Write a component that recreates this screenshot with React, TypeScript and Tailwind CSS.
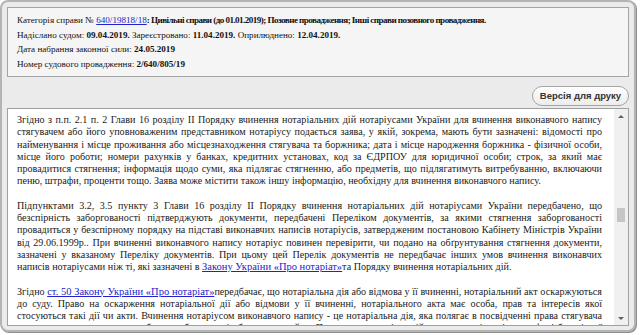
const Link = ({ children, big }: { children: React.ReactNode; big?: boolean }) => (
  <a className={big ? "text-[#2222cc] underline text-[10.5px] leading-none" : "text-[#2222cc] underline"}>
    {children}
  </a>
);

const App = () => {
  return (
    <div className="w-[640px] h-[335px] bg-white overflow-hidden font-['Liberation_Serif',serif]">
      <div className="w-[636px] h-[332px] rounded-[8px] border-2 border-[#b4b4b4] bg-[#ebebeb] shadow-[1px_1px_0_#8f8f8f] px-[5px] pt-[5px] flex flex-col">
        {/* case info */}
        <div className="h-[70px] border border-[#a4a4a4] bg-[#f5f5f5] px-[9px] pt-[5px] text-[9.1px] leading-[14.5px] text-[#111]">
          <div className="whitespace-nowrap">
            Категорія справи № <Link>640/19818/18</Link>
            <b className="tracking-[-0.55px]">
              : Цивільні справи (до 01.01.2019); Позовне провадження; Інші справи позовного провадження.
            </b>
          </div>
          <div>
            Надіслано судом: <b>09.04.2019.</b> Зареєстровано: <b>11.04.2019.</b> Оприлюднено:{" "}
            <b>12.04.2019.</b>
          </div>
          <div>
            Дата набрання законної сили: <b>24.05.2019</b>
          </div>
          <div>
            Номер судового провадження: <b>2/640/805/19</b>
          </div>
        </div>

        <div className="flex justify-end mt-[9px]">
          <button className="h-[20px] w-[97px] rounded-[10px] border border-[#a4a4a4] bg-gradient-to-b from-white to-[#ececec] font-['Liberation_Sans',sans-serif] text-[9.5px] font-bold text-[#333]">
            Версія для друку
          </button>
        </div>

        {/* document text */}
        <div className="mt-[2px] mb-[4px] flex-1 min-h-0 flex border border-[#a0a0a0] bg-white overflow-hidden">
          <div className="flex-1 pl-[9px] pr-[12px] pt-[5px] text-[10.1px] leading-[12.25px] text-justify text-[#1a1a1a] space-y-[12.25px]">
            <p>
              Згідно з п.п. 2.1 п. 2 Глави 16 розділу ІІ Порядку вчинення нотаріальних дій нотаріусами України для
              вчинення виконавчого напису стягувачем або його уповноваженим представником нотаріусу подається заява, у
              якій, зокрема, мають бути зазначені: відомості про найменування і місце проживання або місцезнаходження
              стягувача та боржника; дата і місце народження боржника - фізичної особи, місце його роботи; номери
              рахунків у банках, кредитних установах, код за ЄДРПОУ для юридичної особи; строк, за який має провадитися
              стягнення; інформація щодо суми, яка підлягає стягненню, або предметів, що підлягатимуть витребуванню,
              включаючи пеню, штрафи, проценти тощо. Заява може містити також іншу інформацію, необхідну для вчинення
              виконавчого напису.
            </p>
            <p>
              Підпунктами 3.2, 3.5 пункту 3 Глави 16 розділу ІІ Порядку вчинення нотаріальних дій нотаріусами України
              передбачено, що безспірність заборгованості підтверджують документи, передбачені Переліком документів, за
              якими стягнення заборгованості провадиться у безспірному порядку на підставі виконавчих написів
              нотаріусів, затвердженим постановою Кабінету Міністрів України від 29.06.1999р.. При вчиненні виконавчого
              напису нотаріус повинен перевірити, чи подано на обґрунтування стягнення документи, зазначені у вказаному
              Переліку документів. При цьому цей Перелік документів не передбачає інших умов вчинення виконавчих написів
              нотаріусами ніж ті, які зазначені в <Link big>Закону України «Про нотаріат»</Link>та Порядку вчинення
              нотаріальних дій.
            </p>
            <p>
              Згідно <Link big>ст. 50 Закону України «Про нотаріат»</Link>передбачає, що нотаріальна дія або відмова у
              її вчиненні, нотаріальний акт оскаржуються до суду. Право на оскарження нотаріальної дії або відмови у її
              вчиненні, нотаріального акта має особа, прав та інтересів якої стосуються такі дії чи акти. Вчинення
              нотаріусом виконавчого напису - це нотаріальна дія, яка полягає в посвідченні права стягувача на стягнення
              грошових сум або витребування від боржника майна. При цьому нотаріус здійснює свою діяльність у сфері
              безспірної юрисдикції.
            </p>
          </div>

          {/* scrollbar */}
          <div className="w-[14px] bg-[#f0f0f0] flex flex-col items-center">
            <div className="h-[14px] flex items-center justify-center">
              <div className="w-0 h-0 border-l-[3px] border-r-[3px] border-b-[3px] border-l-transparent border-r-transparent border-b-[#606060]" />
            </div>
            <div className="mt-[85px] w-[8px] h-[14px] bg-[#c6c6c6]" />
            <div className="flex-1" />
            <div className="h-[14px] flex items-center justify-center">
              <div className="w-0 h-0 border-l-[3px] border-r-[3px] border-t-[3px] border-l-transparent border-r-transparent border-t-[#606060]" />
            </div>
          </div>
        </div>
      </div>
    </div>
  );
};

export default App;
